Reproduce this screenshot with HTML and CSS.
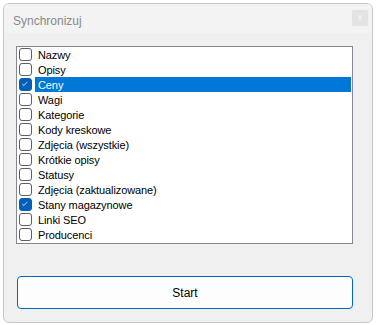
FILE: index.html
```html
<!DOCTYPE html>
<html lang="pl">
<head>
<meta charset="UTF-8">
<title>Synchronizuj</title>
<link rel="stylesheet" href="styles.css">
</head>
<body>

<div class="window">
  <div class="titlebar">
    <span class="title">Synchronizuj</span>
    <span class="close">x</span>
  </div>

  <div class="content">
    <div class="list">
      <div class="item"><span class="box"></span><span class="label">Nazwy</span></div>
      <div class="item"><span class="box"></span><span class="label">Opisy</span></div>
      <div class="item selected"><span class="box checked"><svg viewBox="0 0 13 13"><path d="M3.5 6.8 L5.6 8.8 L9.6 4.4"/></svg></span><span class="label">Ceny</span></div>
      <div class="item"><span class="box"></span><span class="label">Wagi</span></div>
      <div class="item"><span class="box"></span><span class="label">Kategorie</span></div>
      <div class="item"><span class="box"></span><span class="label">Kody kreskowe</span></div>
      <div class="item"><span class="box"></span><span class="label">Zdjęcia (wszystkie)</span></div>
      <div class="item"><span class="box"></span><span class="label">Krótkie opisy</span></div>
      <div class="item"><span class="box"></span><span class="label">Statusy</span></div>
      <div class="item"><span class="box"></span><span class="label">Zdjęcia (zaktualizowane)</span></div>
      <div class="item"><span class="box checked"><svg viewBox="0 0 13 13"><path d="M3.5 6.8 L5.6 8.8 L9.6 4.4"/></svg></span><span class="label">Stany magazynowe</span></div>
      <div class="item"><span class="box"></span><span class="label">Linki SEO</span></div>
      <div class="item"><span class="box"></span><span class="label">Producenci</span></div>
    </div>

    <button class="start">Start</button>
  </div>
</div>

</body>
</html>
```

FILE: styles.css
```css
body {
  margin: 0;
  background: #ffffff;
  font-family: "Liberation Sans", Arial, sans-serif;
  font-size: 11px;
}
.window {
  margin: 3px;
  width: 368px;
  height: 318px;
  border: 1px solid #c6c6c6;
  border-radius: 6px;
  background-color: #f0f0f0;
  overflow: hidden;
}
.titlebar {
  height: 29px;
  background-color: #f3f3f3;
  display: flex;
  align-items: flex-start;
  justify-content: space-between;
}
.title {
  margin: 10px 0 0 9px;
  color: #8a8a8a;
  font-size: 12px;
}
.close {
  margin: 6px 4px 0 0;
  width: 16px;
  height: 16px;
  background-color: #e3e3e3;
  color: #f6f6f6;
  font-size: 9px;
  line-height: 15px;
  text-align: center;
}
.content {
  padding: 13px 0 0 12px;
}
.list {
  width: 335px;
  height: 196px;
  border: 1px solid #828790;
  background-color: #ffffff;
}
.item {
  height: 15px;
  display: flex;
  align-items: center;
  color: #000000;
}
.box {
  width: 11px;
  height: 11px;
  margin: 0 3px 0 2px;
  border: 1px solid #5f5f5f;
  border-radius: 3px;
  background-color: #ffffff;
  flex: none;
}
.box.checked {
  border-color: #005fb8;
  background-color: #005fb8;
}
.box svg {
  display: block;
  width: 11px;
  height: 11px;
  margin: 0;
}
.box svg path {
  fill: none;
  stroke: #d9e8f7;
  stroke-width: 1;
  transform: translate(-1px, -1px);
}
.label {
  flex: 1;
  height: 15px;
  line-height: 16px;
  padding-left: 3px;
  margin-right: 1px;
  letter-spacing: -0.1px;
}
.selected .label {
  background-color: #0078d7;
  color: #ffffff;
}
.start {
  display: block;
  margin: 32px 0 0 1px;
  width: 336px;
  height: 33px;
  padding-top: 2px;
  border: 1px solid #0067c0;
  border-radius: 4px;
  background-color: #fdfdfd;
  font-family: "Liberation Sans", Arial, sans-serif;
  font-size: 12px;
  color: #000000;
}
```
